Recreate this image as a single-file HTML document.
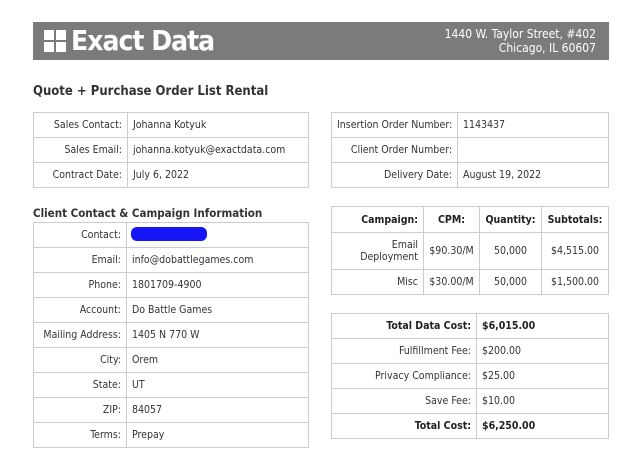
<html><head><style>
body{margin:0;width:632px;height:456px;background:#fff;font-family:"DejaVu Sans Condensed","DejaVu Sans","Liberation Sans",sans-serif;color:#333;position:relative;overflow:hidden}
.a{position:absolute}
table{position:absolute;border-collapse:collapse;font-size:10.5px;table-layout:fixed}
td{border:1px solid #ccc;padding:0 5px;height:25px;white-space:nowrap}
td.l{text-align:right}
.c td{text-align:center}
.c td.l{text-align:right}
b{color:#222}
</style></head><body>
<div class="a" style="left:33px;top:22px;width:576px;height:38px;background:#7b7b7b"></div>
<svg class="a" style="left:44px;top:30px" width="22" height="22"><rect x="0" y="0" width="10" height="10" fill="#fff"/><rect x="12" y="0" width="10" height="10" fill="#fff"/><rect x="0" y="12" width="10" height="10" fill="#fff"/><rect x="12" y="12" width="10" height="10" fill="#fff"/></svg>
<div class="a" style="left:71px;top:24px;font-size:28px;font-weight:bold;color:#fff;letter-spacing:-1px;font-family:'DejaVu Sans Condensed','DejaVu Sans',sans-serif">Exact Data</div>
<div class="a" style="right:36px;top:27px;text-align:right;color:#fff;font-size:12px;line-height:14px">1440 W. Taylor Street, #402<br>Chicago, IL 60607</div>
<div class="a" style="left:33px;top:84px;font-size:13px;font-weight:bold;color:#333">Quote + Purchase Order List Rental</div>
<table style="left:33px;top:112px;width:276px"><col style="width:94px"><col>
<tr><td class="l">Sales Contact:</td><td>Johanna Kotyuk</td></tr>
<tr><td class="l">Sales Email:</td><td>johanna.kotyuk@exactdata.com</td></tr>
<tr><td class="l">Contract Date:</td><td>July 6, 2022</td></tr></table>
<table style="left:331px;top:112px;width:278px"><col style="width:126px"><col>
<tr><td class="l">Insertion Order Number:</td><td>1143437</td></tr>
<tr><td class="l">Client Order Number:</td><td></td></tr>
<tr><td class="l">Delivery Date:</td><td>August 19, 2022</td></tr></table>
<div class="a" style="left:33px;top:206px;font-size:11.5px;font-weight:bold;color:#333">Client Contact &amp; Campaign Information</div>
<table style="left:33px;top:222px;width:276px"><col style="width:93px"><col>
<tr><td class="l">Contact:</td><td></td></tr>
<tr><td class="l">Email:</td><td>info@dobattlegames.com</td></tr>
<tr><td class="l">Phone:</td><td>1801709-4900</td></tr>
<tr><td class="l">Account:</td><td>Do Battle Games</td></tr>
<tr><td class="l">Mailing Address:</td><td>1405 N 770 W</td></tr>
<tr><td class="l">City:</td><td>Orem</td></tr>
<tr><td class="l">State:</td><td>UT</td></tr>
<tr><td class="l">ZIP:</td><td>84057</td></tr>
<tr><td class="l">Terms:</td><td>Prepay</td></tr></table>
<div class="a" style="left:131px;top:227px;width:76px;height:14px;background:#1515f5;border-radius:6px"></div>
<table class="c" style="left:331px;top:206px;width:278px"><col style="width:92px"><col style="width:56px"><col style="width:62px"><col>
<tr><td class="l" style="height:26px"><b>Campaign:</b></td><td><b>CPM:</b></td><td><b>Quantity:</b></td><td><b>Subtotals:</b></td></tr>
<tr><td class="l" style="height:37px;line-height:12px">Email<br>Deployment</td><td>$90.30/M</td><td>50,000</td><td>$4,515.00</td></tr>
<tr><td class="l">Misc</td><td>$30.00/M</td><td>50,000</td><td>$1,500.00</td></tr></table>
<table style="left:331px;top:313px;width:278px"><col style="width:145px"><col>
<tr><td class="l"><b>Total Data Cost:</b></td><td><b>$6,015.00</b></td></tr>
<tr><td class="l">Fulfillment Fee:</td><td>$200.00</td></tr>
<tr><td class="l">Privacy Compliance:</td><td>$25.00</td></tr>
<tr><td class="l">Save Fee:</td><td>$10.00</td></tr>
<tr><td class="l"><b>Total Cost:</b></td><td><b>$6,250.00</b></td></tr></table>
</body></html>
